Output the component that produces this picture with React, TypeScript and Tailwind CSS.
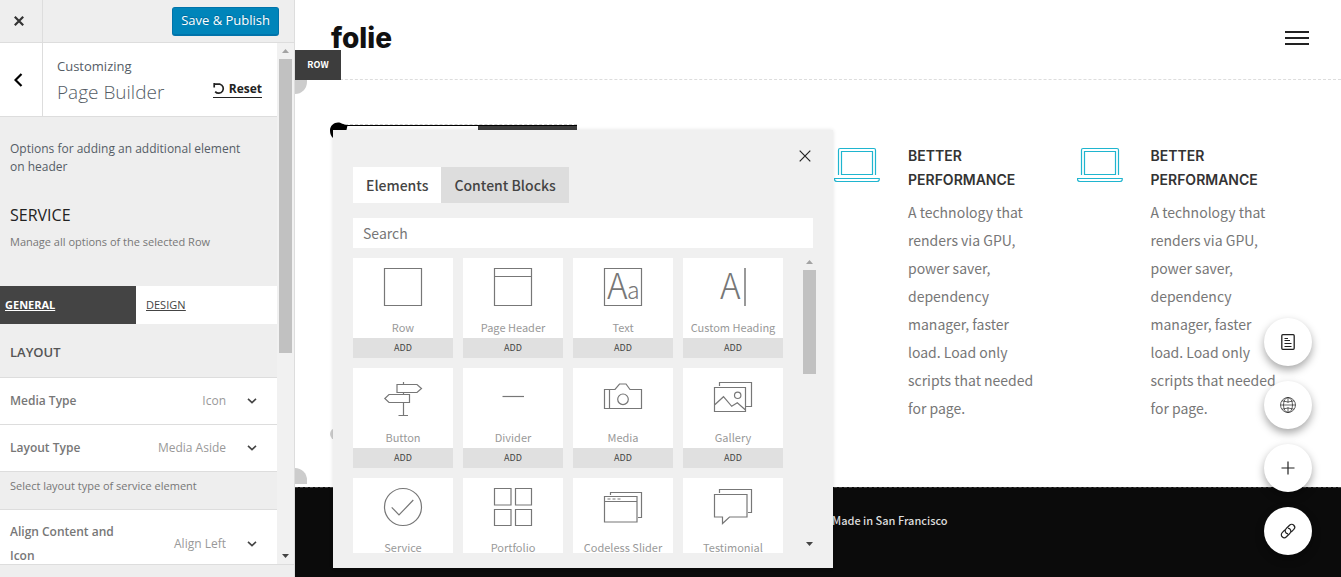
import type { ReactNode } from "react";

const uiFont = "font-['Open_Sans','Noto_Sans',sans-serif]";
const siteFont = "font-['Noto_Sans_CJK_SC','Noto_Sans',sans-serif]";

function Chevron() {
  return (
    <svg width="10" height="6" viewBox="0 0 10 6" fill="none" stroke="#444" strokeWidth="1.6" aria-hidden="true">
      <path d="M1 .8 5 4.6 9 .8" />
    </svg>
  );
}

function Arrow({ up }: { up?: boolean }) {
  return (
    <svg width="7" height="4" viewBox="0 0 7 4" fill={up ? "#a3a3a3" : "#444"} aria-hidden="true">
      {up ? <path d="M0 4 3.5 0 7 4Z" /> : <path d="M0 0 3.5 4 7 0Z" />}
    </svg>
  );
}

function OptionRow({ id, label, value }: { id: string; label: string; value: string }) {
  return (
    <div className="relative flex min-h-[47px] items-center border-b border-[#ddd] bg-white pl-2.5">
      <label htmlFor={id} className="w-32 text-xs leading-6 font-semibold text-[#777]">
        {label}
      </label>
      <select
        id={id}
        defaultValue={value}
        className="min-w-0 flex-1 appearance-none bg-transparent pr-[51px] text-xs text-[#999] [text-align-last:right]"
      >
        <option>{value}</option>
      </select>
      <span className="pointer-events-none absolute right-5">
        <Chevron />
      </span>
    </div>
  );
}

function Sidebar() {
  return (
    <aside className={`${uiFont} flex h-screen w-[295px] shrink-0 flex-col border-r border-[#ddd] bg-[#eee]`}>
      <div className="flex h-[43px] shrink-0 items-center justify-between border-b border-[#ddd] pr-[15px]">
        <button aria-label="Close" className="flex h-full w-[43px] items-center border-r border-[#ddd] pl-3.5">
          <svg width="10" height="10" viewBox="0 0 10 10" stroke="#333" strokeWidth="2.2" aria-hidden="true">
            <path d="M.8.8 9.2 9.2M9.2.8.8 9.2" />
          </svg>
        </button>
        <button className="h-[29px] rounded-[3px] border border-b-2 border-[#0073aa] bg-[#0085ba] px-2 text-[13px] leading-none text-white [text-shadow:0_-1px_1px_#006799]">
          Save &amp; Publish
        </button>
      </div>

      <div className="flex min-h-0 flex-1">
        <div className="min-w-0 flex-1 overflow-hidden">
          <div className="flex h-[74px] border-b border-[#ddd] bg-white">
            <button aria-label="Back" className="flex w-[43px] items-center border-r border-[#ddd] pl-3.5">
              <svg width="9" height="14" viewBox="0 0 9 14" fill="none" stroke="#000" strokeWidth="2.2" aria-hidden="true">
                <path d="M7.5 1 1.5 7 7.5 13" />
              </svg>
            </button>
            <div className="flex flex-1 items-end justify-between pr-[15px] pb-2 pl-3.5">
              <div>
                <p className="text-[13px] leading-5 text-[#555d66]">Customizing</p>
                <h1 className="text-[19px] leading-8 font-light text-[#555d66]">Page Builder</h1>
              </div>
              <button className="mb-2.5 flex items-center gap-1 border-b border-[#222] text-xs leading-4 font-bold text-[#222]">
                <svg width="12" height="12" viewBox="0 0 12 12" fill="none" stroke="#222" strokeWidth="1.7" aria-hidden="true">
                  <path d="M2 1.2H7A4.6 4.6 0 1 1 2.2 8.6M1.2 0V4.4" />
                </svg>
                Reset
              </button>
            </div>
          </div>

          <p className="pt-[23px] pr-6 pl-2.5 text-xs leading-[18px] text-[#555d66]">
            Options for adding an additional element on header
          </p>
          <h2 className="px-2.5 pt-[27px] text-base leading-6 font-medium text-[#222]">SERVICE</h2>
          <p className="px-2.5 pt-1.5 text-[11px] leading-[18px] text-[#777]">Manage all options of the selected Row</p>

          <nav className="mt-[35px] flex h-[38px] items-stretch text-[11px] underline">
            <a href="#general" className="flex w-[136px] items-center bg-[#444] pl-[5px] font-bold text-white">
              GENERAL
            </a>
            <a href="#design" className="flex flex-1 items-center bg-white pl-2.5 text-[#444]">
              DESIGN
            </a>
          </nav>

          <h3 className="flex h-[54px] items-center border-b border-[#ddd] px-2.5 pt-1 text-[13px] font-semibold text-[#555]">
            LAYOUT
          </h3>
          <OptionRow id="media-type" label="Media Type" value="Icon" />
          <OptionRow id="layout-type" label="Layout Type" value="Media Aside" />
          <p className="h-[38px] border-b border-[#ddd] px-2.5 pt-[5px] text-[11px] leading-[18px] text-[#777]">
            Select layout type of service element
          </p>
          <div className="bg-white py-2.5">
            <OptionRow id="align" label="Align Content and Icon" value="Align Left" />
          </div>
        </div>

        <div className="flex w-[17px] flex-col items-center justify-between bg-[#f1f1f1] py-1.5">
          <div className="flex flex-col items-center gap-1.5">
            <Arrow up />
            <div className="h-[294px] w-[13px] bg-[#c1c1c1]" />
          </div>
          <Arrow />
        </div>
      </div>
      <div className="h-[13px] shrink-0 border-t border-[#ddd]" />
    </aside>
  );
}

function ElementIcon({ children }: { children: ReactNode }) {
  return (
    <svg width="38" height="38" viewBox="0 0 38 38" fill="none" stroke="#777" strokeWidth="1.2" className="shrink-0 overflow-visible" aria-hidden="true">
      {children}
    </svg>
  );
}

const letter = "font-['Noto_Sans_CJK_SC','Noto_Sans',sans-serif] font-light";

const elements: { name: string; icon: ReactNode }[] = [
  { name: "Row", icon: <path d="M.5.5H37.5V37.5H.5Z" /> },
  { name: "Page Header", icon: <path d="M.5.5H37.5V37.5H.5ZM.5 8.5H37.5" /> },
  {
    name: "Text",
    icon: (
      <>
        <path d="M.5.5H37.5V37.5H.5Z" />
        <text x="3" y="31" fontSize="35" className={letter} fill="#777" stroke="none">A</text>
        <text x="23" y="31" fontSize="23" className={letter} fill="#777" stroke="none">a</text>
      </>
    ),
  },
  {
    name: "Custom Heading",
    icon: (
      <>
        <text x="6" y="31" fontSize="35" className={letter} fill="#777" stroke="none">A</text>
        <path d="M31 0V38" stroke="#999" strokeWidth="2" />
      </>
    ),
  },
  {
    name: "Button",
    icon: <path d="M13 6.5H33L37.5 10.5 33 14.5H13ZM25.5 16.5H5L.8 20.5 5 24.5H25.5ZM19.5 4V6.5M19.5 14.5V16.5M19.5 24.5V37.5M14.5 37.5H24" />,
  },
  { name: "Divider", icon: <path d="M8.5 18.5H30" /> },
  {
    name: "Media",
    icon: (
      <>
        <path d="M.5 11.5H11L15.5 6H22L26 11.5H37.5V30.5H.5ZM5.5 11.5V30.5" />
        <circle cx="19" cy="21.3" r="5.3" />
      </>
    ),
  },
  {
    name: "Gallery",
    icon: (
      <>
        <path d="M.5 9.5H31.5V33.5H.5ZM5.5 8V4.5H37.5V28.5H32M.5 27 9.5 18.7 17.7 28.3 23.3 24.7 31.5 32" />
        <circle cx="23.7" cy="17.3" r="3.2" />
      </>
    ),
  },
  {
    name: "Service",
    icon: (
      <>
        <circle cx="19" cy="19" r="18.5" />
        <path d="M7.7 19.3 15 27 29.3 12" />
      </>
    ),
  },
  {
    name: "Portfolio",
    icon: <path d="M.5.5H17V17H.5ZM21.5.5H37.5V17H21.5ZM.5 21.5H17V37.5H.5ZM21.5 21.5H37.5V37.5H21.5Z" />,
  },
  {
    name: "Codeless Slider",
    icon: (
      <>
        <path d="M.5 8.5H33V34H.5ZM.5 13.5H33M6.5 7V4.5H37.5V29.5H34" />
        <path d="M3.5 11H17" strokeDasharray="3 2" />
      </>
    ),
  },
  { name: "Testimonial", icon: <path d="M.5 6.5H33V29H15.5L8.5 35.5V29H.5ZM5.5 5V1.5H37.5V24.5H34" /> },
];

function ElementPicker() {
  return (
    <div
      role="dialog"
      aria-label="Elements"
      className="absolute top-[130px] left-[38px] flex h-[438px] w-[500px] flex-col bg-[#f0f0f0] px-5 pb-[15px] shadow-[0_0_4px_rgba(0,0,0,0.12)]"
    >
      <div className="flex h-[37px] items-center justify-end pt-3.5 pr-0.5">
        <button aria-label="Close elements">
          <svg width="12" height="12" viewBox="0 0 12 12" stroke="#222" strokeWidth="1.2" aria-hidden="true">
            <path d="M.7.7 11.3 11.3M11.3.7.7 11.3" />
          </svg>
        </button>
      </div>
      <div className="flex h-9 shrink-0 text-sm font-medium text-[#444]">
        <button className="bg-white px-[13px]">Elements</button>
        <button className="bg-[#ddd] px-[13px]">Content Blocks</button>
      </div>
      <input
        aria-label="Search elements"
        placeholder="Search"
        className="mt-[15px] h-[30px] shrink-0 bg-white px-2.5 text-sm placeholder:text-[#777]"
      />
      <div className="mt-2.5 -mr-[3px] flex min-h-0 flex-1 justify-between">
        <div className="grid grid-cols-4 content-start gap-2.5 overflow-hidden">
          {elements.map((el) => (
            <div key={el.name} className="flex h-[100px] w-[100px] flex-col items-center justify-between bg-white pt-2.5">
              <ElementIcon>{el.icon}</ElementIcon>
              <div className="w-full text-center">
                <p className="pb-px text-[11px] leading-5 whitespace-nowrap text-[#999]">{el.name}</p>
                <button className="block h-5 w-full bg-[#e0e0e0] text-[9px] leading-5 text-[#444]">ADD</button>
              </div>
            </div>
          ))}
        </div>
        <div className="flex w-[13px] flex-col items-center justify-between pt-0.5 pb-[7px]">
          <div className="flex flex-col items-center gap-1.5">
            <Arrow up />
            <div className="h-[104px] w-[13px] bg-[#c1c1c1]" />
          </div>
          <Arrow />
        </div>
      </div>
    </div>
  );
}

function Service({ className = "" }: { className?: string }) {
  return (
    <article className={`flex gap-7 ${className}`}>
      <svg width="46" height="36" viewBox="0 0 46 36" fill="none" stroke="#1fb5cf" strokeWidth="1.2" className="mt-[3px] shrink-0" aria-hidden="true">
        <path d="M4.5 28V3Q4.5 1.5 6 1.5H40Q41.5 1.5 41.5 3V28M7.5 4.5H38.5V27.5H7.5ZM.6 31.5H45.2V33Q44.8 34.5 43 34.5H3Q1 34.5.6 33Z" />
      </svg>
      <div>
        <h4 className="font-['Inter',sans-serif] text-sm leading-6 font-semibold text-[#333]">BETTER PERFORMANCE</h4>
        <p className="pt-1.5 pr-2 text-sm leading-7 text-[#777]">
          A technology that renders via GPU, power saver, dependency manager, faster load. Load only scripts that needed
          for page.
        </p>
      </div>
    </article>
  );
}

const actions: { label: string; icon: ReactNode }[] = [
  {
    label: "Pages",
    icon: (
      <>
        <rect x="1.8" y=".7" width="12.4" height="14.6" rx="1" strokeWidth="1.3" />
        <path d="M4.5 4.5H8M4.5 6.5H10M4.5 9.5H11.5M4.5 12.5H11.5" strokeWidth="1.1" />
      </>
    ),
  },
  {
    label: "Language",
    icon: (
      <g strokeWidth=".7">
        <circle cx="8" cy="8" r="7.5" />
        <ellipse cx="8" cy="8" rx="4.5" ry="7.5" />
        <path d="M.5 8H15.5M8 .5V5.8M8 10.2V15.5M2 3.8Q8 6.2 14 3.8M2 12.2Q8 9.8 14 12.2" />
      </g>
    ),
  },
  { label: "Add", icon: <path d="M8 1.5V14.5M1.5 8H14.5" strokeWidth="1.2" /> },
  {
    label: "Link",
    icon: (
      <g strokeWidth="1.2" transform="rotate(-45 8 8)">
        <path d="M9.5 11H13.2A3 3 0 0 0 13.2 5H8.5A3 3 0 0 0 6 10M6.5 5H2.8A3 3 0 0 0 2.8 11H7.5A3 3 0 0 0 10 6" />
      </g>
    ),
  },
];

function Preview() {
  return (
    <main className={`${siteFont} relative flex min-w-0 flex-1 flex-col overflow-hidden bg-white`}>
      <header className="flex h-20 shrink-0 items-center justify-between border-b border-dashed border-[#ddd] pr-8 pb-1 pl-9">
        <a href="#home" className="font-['Inter',sans-serif] text-[28px] leading-8 font-extrabold text-[#111]">
          folie
        </a>
        <button aria-label="Menu" className="flex w-6 flex-col gap-1">
          <span className="h-0.5 bg-[#222]" />
          <span className="h-0.5 bg-[#222]" />
          <span className="h-0.5 bg-[#222]" />
        </button>
      </header>

      <section className="grid grid-cols-4 gap-x-[30px] pt-16 pr-[52px] pb-[65px] pl-[54px]">
        <Service className="col-start-3" />
        <Service />
      </section>

      <footer className="flex-1 border-t border-dashed border-[#444] bg-[#0b0b0b] pt-[22px] pl-[537px] text-[11px] leading-5 font-medium text-[#ddd]">
        Made in San Francisco
      </footer>

      <div className="absolute top-[78px] left-0 h-4 w-3 rounded-br-full bg-[#ccc]" />
      <div className="absolute top-[468px] left-0 h-4 w-3 rounded-tr-full bg-[#ccc]" />
      <div className="absolute top-[428px] left-[35px] size-3 rounded-full bg-[#ccc]" />
      <div className="absolute top-[50px] left-0 flex h-[30px] w-[46px] items-center justify-center bg-[#3d3d3d] text-[9px] font-bold text-white">
        ROW
      </div>
      <div className="absolute top-[124px] left-[50px] flex h-2 w-[232px] border-t border-dashed border-[#ccc]">
        <div className="flex flex-1 justify-end border-t border-black">
          <div className="w-[99px] bg-[#3d3d3d]" />
        </div>
      </div>
      <svg width="18" height="16" viewBox="0 0 18 16" className="absolute top-[122px] left-[35px]" aria-hidden="true">
        <path d="M0 8.5C0 3.5 4 .5 8 .5 11 .5 13 2.5 17.5 3.5L16 10 12 16H3Q0 13 0 8.5Z" fill="#000" />
      </svg>

      <ElementPicker />

      <div className="absolute right-[29px] bottom-[22px] flex flex-col gap-[15px]">
        {actions.map((action) => (
          <button
            key={action.label}
            aria-label={action.label}
            className="flex size-12 items-center justify-center rounded-full bg-white shadow-[0_4px_8px_rgba(0,0,0,0.35)]"
          >
            <svg width="16" height="16" viewBox="0 0 16 16" fill="none" stroke="#222" className="overflow-visible" aria-hidden="true">
              {action.icon}
            </svg>
          </button>
        ))}
      </div>
    </main>
  );
}

export default function App() {
  return (
    <div className="flex h-screen overflow-hidden">
      <Sidebar />
      <Preview />
    </div>
  );
}
